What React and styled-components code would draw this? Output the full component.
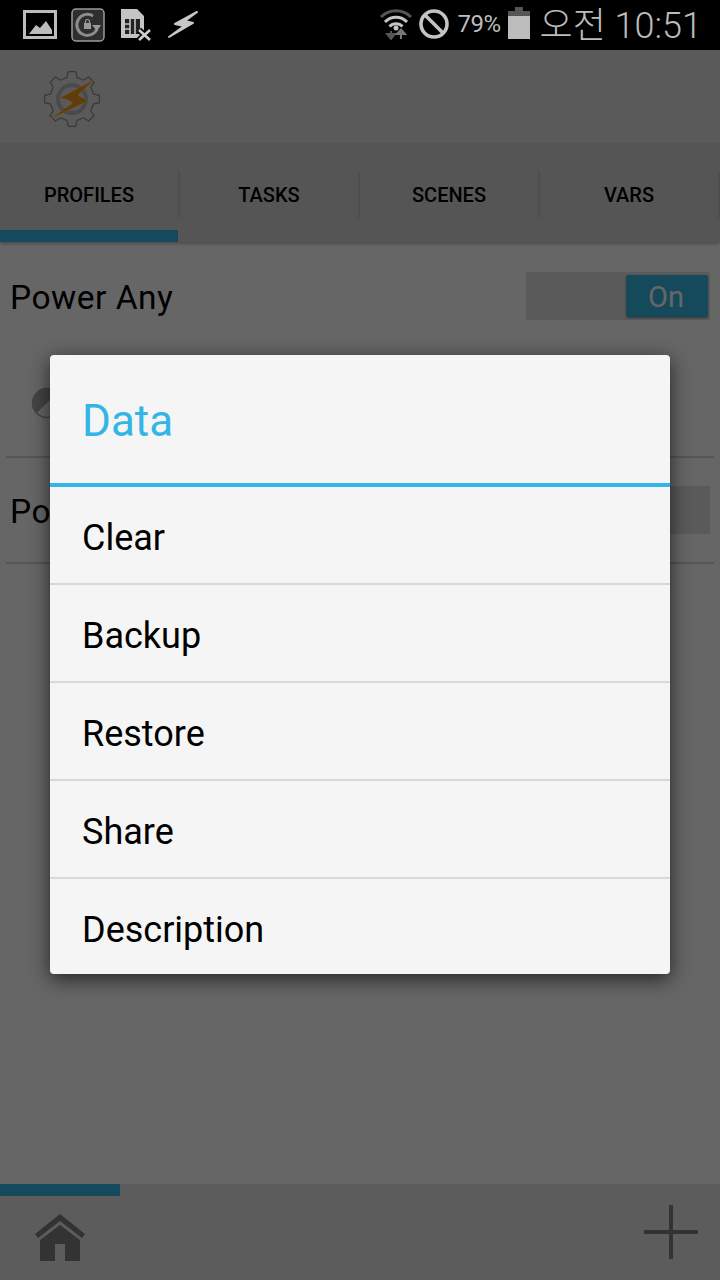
import React from "react"
import styled, { createGlobalStyle } from "styled-components"

const GlobalStyle = createGlobalStyle`
  html, body {
    margin: 0;
    padding: 0;
    background: #000;
  }
  * {
    box-sizing: border-box;
  }
`

const Screen = styled.div`
  width: 720px;
  height: 1280px;
  display: flex;
  flex-direction: column;
  overflow: hidden;
  font-family: Roboto, "Noto Sans CJK KR", sans-serif;
`

const StatusBar = styled.div`
  height: 50px;
  flex: none;
  background: #000;
  display: flex;
  align-items: center;
  justify-content: space-between;
  padding: 0 18px 0 23px;
  color: #bcbcbc;
`

const StatusGroup = styled.div`
  display: flex;
  align-items: center;
  gap: ${(p) => p.$gap || 0}px;

  svg {
    display: block;
  }
`

const StatusIcon = styled.span`
  display: block;
  margin: 0 ${(p) => p.$right || 0}px ${(p) => p.$lift || 0}px ${(p) => p.$left || 0}px;
`

const Percent = styled.span`
  font-size: 24px;
  letter-spacing: -0.5px;
  margin: 0 7px 2px 8px;
`

const Clock = styled.span`
  font-size: 36px;
  font-weight: 300;
  margin: 0 0 6px 10px;
  white-space: nowrap;
`

const Main = styled.div`
  position: relative;
  flex: 1;
  display: flex;
  flex-direction: column;
  background: #fff;
`

const Header = styled.div`
  height: 93px;
  flex: none;
  background: #e2e2e2;
  display: flex;
  align-items: center;
  padding: 4px 0 0 44px;
`

const TabBar = styled.div`
  height: 99px;
  flex: none;
  display: flex;
  background: #d4d4d4;
  box-shadow: 0 2px 3px rgba(0, 0, 0, 0.25);
  position: relative;
`

const Tab = styled.div`
  width: 180.3px;
  display: flex;
  align-items: center;
  justify-content: center;
  position: relative;
  padding: 5px 2px 0 0;
  font-size: 20px;
  font-weight: 500;
  color: #000;

  &:not(:last-child)::after {
    content: "";
    position: absolute;
    right: 0;
    top: 28px;
    width: 2px;
    height: 47px;
    background: #c2c2c2;
  }
`

const Indicator = styled.div`
  position: absolute;
  left: 0;
  ${(p) => (p.$atTop ? "top: 0;" : "bottom: 0;")}
  height: 12px;
  width: ${(p) => p.$width}px;
  background: #36b6e6;
`

const List = styled.div`
  flex: 1;
  padding: 0 6px;
`

const Profile = styled.div`
  border-bottom: 2px solid #d6d6d6;
  height: ${(p) => p.$height}px;
  padding-top: ${(p) => p.$top}px;
`

const ProfileHead = styled.div`
  display: flex;
  align-items: center;
  justify-content: space-between;
  padding: 0 4px;
`

const ProfileName = styled.span`
  font-size: 33.5px;
  letter-spacing: 0.5px;
  color: #000;
  padding-top: 2px;
`

const Toggle = styled.div`
  width: 184px;
  height: 48px;
  background: #e2e2e2;
  display: flex;
  justify-content: flex-end;
  padding: 3px 2px 3px 0;
`

const ToggleKnob = styled.div`
  width: 82px;
  height: 42px;
  border-radius: 2px;
  background: #36b6e6;
  box-shadow: 0 1px 2px rgba(0, 0, 0, 0.4);
  color: #fff;
  opacity: ${(p) => (p.$off ? 0 : 1)};
  font-size: 29px;
  display: flex;
  align-items: center;
  justify-content: center;
  padding: 2px 2px 0 0;
`

const ProfileDetail = styled.div`
  padding: 67px 0 0 25px;
  display: flex;
`

const BottomBar = styled.div`
  height: 96px;
  flex: none;
  background: #e6e6e6;
  position: relative;
  display: flex;
  align-items: center;
  justify-content: space-between;
  padding: 12px 22px 0 35px;
`

const PlusWrap = styled.div`
  display: flex;
  margin-bottom: 12px;
`

const Scrim = styled.div`
  position: absolute;
  inset: 0;
  padding-bottom: 1px;
  background: rgba(0, 0, 0, 0.6);
  display: flex;
  align-items: center;
  justify-content: center;
`

const Dialog = styled.div`
  width: 620px;
  height: 619px;
  background: #f5f5f5;
  border-radius: 4px;
  box-shadow: 0 5px 20px rgba(0, 0, 0, 0.65);
  display: flex;
  flex-direction: column;
  overflow: hidden;
`

const DialogTitle = styled.div`
  height: 132px;
  flex: none;
  display: flex;
  align-items: center;
  padding: 4px 0 0 32px;
  font-size: 44px;
  color: #33b5e5;
  border-bottom: 4px solid #33b5e5;
`

const MenuItem = styled.div`
  height: 98px;
  flex: none;
  display: flex;
  align-items: center;
  padding: 4px 0 0 32px;
  font-size: 36px;
  color: #000;

  &:not(:last-child) {
    padding-top: 6px;
    border-bottom: 2px solid #d8d8d8;
  }
`

const PictureIcon = () => (
  <svg width="34" height="30" viewBox="0 0 34 30">
    <rect x="1.5" y="1.5" width="31" height="26" fill="none" stroke="#bcbcbc" strokeWidth="3" />
    <path d="M6 24 L13 15 L17 18 L23 11 L29 20 V24 Z" fill="#bcbcbc" />
  </svg>
)

const RotateLockIcon = () => (
  <svg width="34" height="34" viewBox="0 0 34 34">
    <rect x="1" y="1" width="32" height="32" rx="4" fill="#2e2e2e" stroke="#9a9a9a" strokeWidth="1.5" />
    <path d="M26 21 A10.500 10.500 0 1 1 22 8" fill="none" stroke="#8c8c8c" strokeWidth="3" />
    <path d="M21 17 H30 L26 23 Z" fill="#9a9a9a" />
    <rect x="13" y="15" width="7" height="6" fill="#9a9a9a" />
    <path d="M14.500 15 V13.500 A2 2 0 0 1 18.500 13.500 V15" fill="none" stroke="#9a9a9a" strokeWidth="1.200" />
  </svg>
)

const SimOffIcon = () => (
  <svg width="32" height="32" viewBox="0 0 32 32">
    <path d="M0 0 H16 L23 7 V29 H0 Z" fill="#c4c4c4" />
    <rect x="4" y="10" width="15" height="15" fill="#222" />
    <path d="M9 10 V25 M14 10 V25 M4 15 H9 M4 20 H9" stroke="#c4c4c4" strokeWidth="1.600" />
    <path d="M18 21 L29 31 M29 21 L18 31" stroke="#000" strokeWidth="6" />
    <path d="M18 21 L29 31 M29 21 L18 31" stroke="#d0d0d0" strokeWidth="2.600" />
  </svg>
)

const FlashIcon = () => (
  <svg width="32" height="30" viewBox="0 0 32 30">
    <path d="M30 2 L8 14 L17 16 L2 27 L26 13 L18 11 Z" fill="#c8c8c8" stroke="#c8c8c8" strokeWidth="2" strokeLinejoin="round" />
  </svg>
)

const WifiIcon = () => (
  <svg width="34" height="34" viewBox="0 0 34 34">
    <path d="M2 10 A21 21 0 0 1 32 10" fill="none" stroke="#555" strokeWidth="3" />
    <path d="M6 15 A15 15 0 0 1 28 15" fill="none" stroke="#c4c4c4" strokeWidth="3" />
    <path d="M10.500 19.500 A9 9 0 0 1 23.500 19.500" fill="none" stroke="#c4c4c4" strokeWidth="3" />
    <circle cx="17" cy="21" r="2.500" fill="#c4c4c4" />
    <path d="M12 24 V29 M8 27 L12 32 L16 27 Z" fill="#555" stroke="#555" strokeWidth="2" />
    <path d="M22 32 V26 M18 27 L22 22.500 L26 27 Z" fill="#777" stroke="#777" strokeWidth="2" />
  </svg>
)

const BlockedIcon = () => (
  <svg width="30" height="30" viewBox="0 0 30 30">
    <circle cx="15" cy="15" r="13" fill="none" stroke="#c4c4c4" strokeWidth="3.600" />
    <path d="M6 6 L24 24" stroke="#c4c4c4" strokeWidth="3.600" />
  </svg>
)

const BatteryIcon = () => (
  <svg width="22" height="32" viewBox="0 0 22 32">
    <rect x="7" y="0" width="8" height="4" fill="#555" />
    <rect x="0" y="4" width="22" height="5" fill="#555" />
    <rect x="0" y="9" width="22" height="23" fill="#bcbcbc" />
  </svg>
)

// gear outline for the app logo
const gearPoints = (() => {
  const pts = []
  const teeth = 8
  for (let i = 0; i < teeth; i++) {
    const a = (i / teeth) * Math.PI * 2 - Math.PI / 2
    const step = (Math.PI * 2) / teeth
    const r = [[-0.3, 22], [-0.17, 27.5], [0.17, 27.5], [0.3, 22]]
    r.forEach(([f, rad]) => {
      const t = a + f * step
      pts.push(`${(28 + rad * Math.cos(t)).toFixed(1)},${(28 + rad * Math.sin(t)).toFixed(1)}`)
    })
  }
  return pts.join(" ")
})()

const TaskerLogo = () => (
  <svg width="56" height="56" viewBox="0 0 56 56">
    <polygon points={gearPoints} fill="none" stroke="#8a8a8a" strokeWidth="1.200" />
    <circle cx="28" cy="28" r="14" fill="none" stroke="#b8b8b8" strokeWidth="4" />
    <path d="M51 8 L16 27 Q24 28 29 32 L6 48 L44 30 L34 24 Z" fill="#f29a1c" stroke="#ffd27a" strokeWidth="0.600" />
  </svg>
)

const HalfCircleIcon = () => (
  <svg width="32" height="32" viewBox="0 0 32 32">
    <circle cx="16" cy="16" r="14.500" fill="#fff" stroke="#aaa" strokeWidth="1.500" />
    <path d="M5.700 26.300 A14.500 14.500 0 0 1 26.300 5.700 Z" fill="#aaa" />
  </svg>
)

const HomeIcon = () => (
  <svg width="50" height="48" viewBox="0 0 50 48">
    <path d="M25 0 L50 20 L47 24 L25 7 L3 24 L0 20 Z" fill="#808080" />
    <path d="M25 11 L45 26 V47 H30 V30 H20 V47 H5 V26 Z" fill="#808080" />
  </svg>
)

const PlusIcon = () => (
  <svg width="54" height="54" viewBox="0 0 54 54">
    <path d="M27 0 V54 M0 27 H54" stroke="#808080" strokeWidth="4" />
  </svg>
)

const tabs = ["PROFILES", "TASKS", "SCENES", "VARS"]
const menu = ["Clear", "Backup", "Restore", "Share", "Description"]

export default function App() {
  return (
    <Screen>
      <GlobalStyle />
      <StatusBar>
        <StatusGroup $gap={14}>
          <PictureIcon />
          <RotateLockIcon />
          <StatusIcon $left={2}>
            <SimOffIcon />
          </StatusIcon>
          <FlashIcon />
        </StatusGroup>
        <StatusGroup>
          <StatusIcon $lift={2}>
            <WifiIcon />
          </StatusIcon>
          <StatusIcon $left={6} $lift={2}>
            <BlockedIcon />
          </StatusIcon>
          <Percent>79%</Percent>
          <StatusIcon $lift={4}>
            <BatteryIcon />
          </StatusIcon>
          <Clock>오전 10:51</Clock>
        </StatusGroup>
      </StatusBar>
      <Main>
        <Header>
          <TaskerLogo />
        </Header>
        <TabBar>
          {tabs.map((t) => (
            <Tab key={t}>{t}</Tab>
          ))}
          <Indicator $width={178} />
        </TabBar>
        <List>
          <Profile $height={216} $top={30}>
            <ProfileHead>
              <ProfileName>Power Any</ProfileName>
              <Toggle>
                <ToggleKnob>On</ToggleKnob>
              </Toggle>
            </ProfileHead>
            <ProfileDetail>
              <HalfCircleIcon />
            </ProfileDetail>
          </Profile>
          <Profile $height={106} $top={28}>
            <ProfileHead>
              <ProfileName>Po</ProfileName>
              <Toggle>
                <ToggleKnob $off />
              </Toggle>
            </ProfileHead>
          </Profile>
        </List>
        <BottomBar>
          <Indicator $width={120} $atTop />
          <HomeIcon />
          <PlusWrap>
            <PlusIcon />
          </PlusWrap>
        </BottomBar>
        <Scrim>
          <Dialog>
            <DialogTitle>Data</DialogTitle>
            {menu.map((m) => (
              <MenuItem key={m}>{m}</MenuItem>
            ))}
          </Dialog>
        </Scrim>
      </Main>
    </Screen>
  )
}
